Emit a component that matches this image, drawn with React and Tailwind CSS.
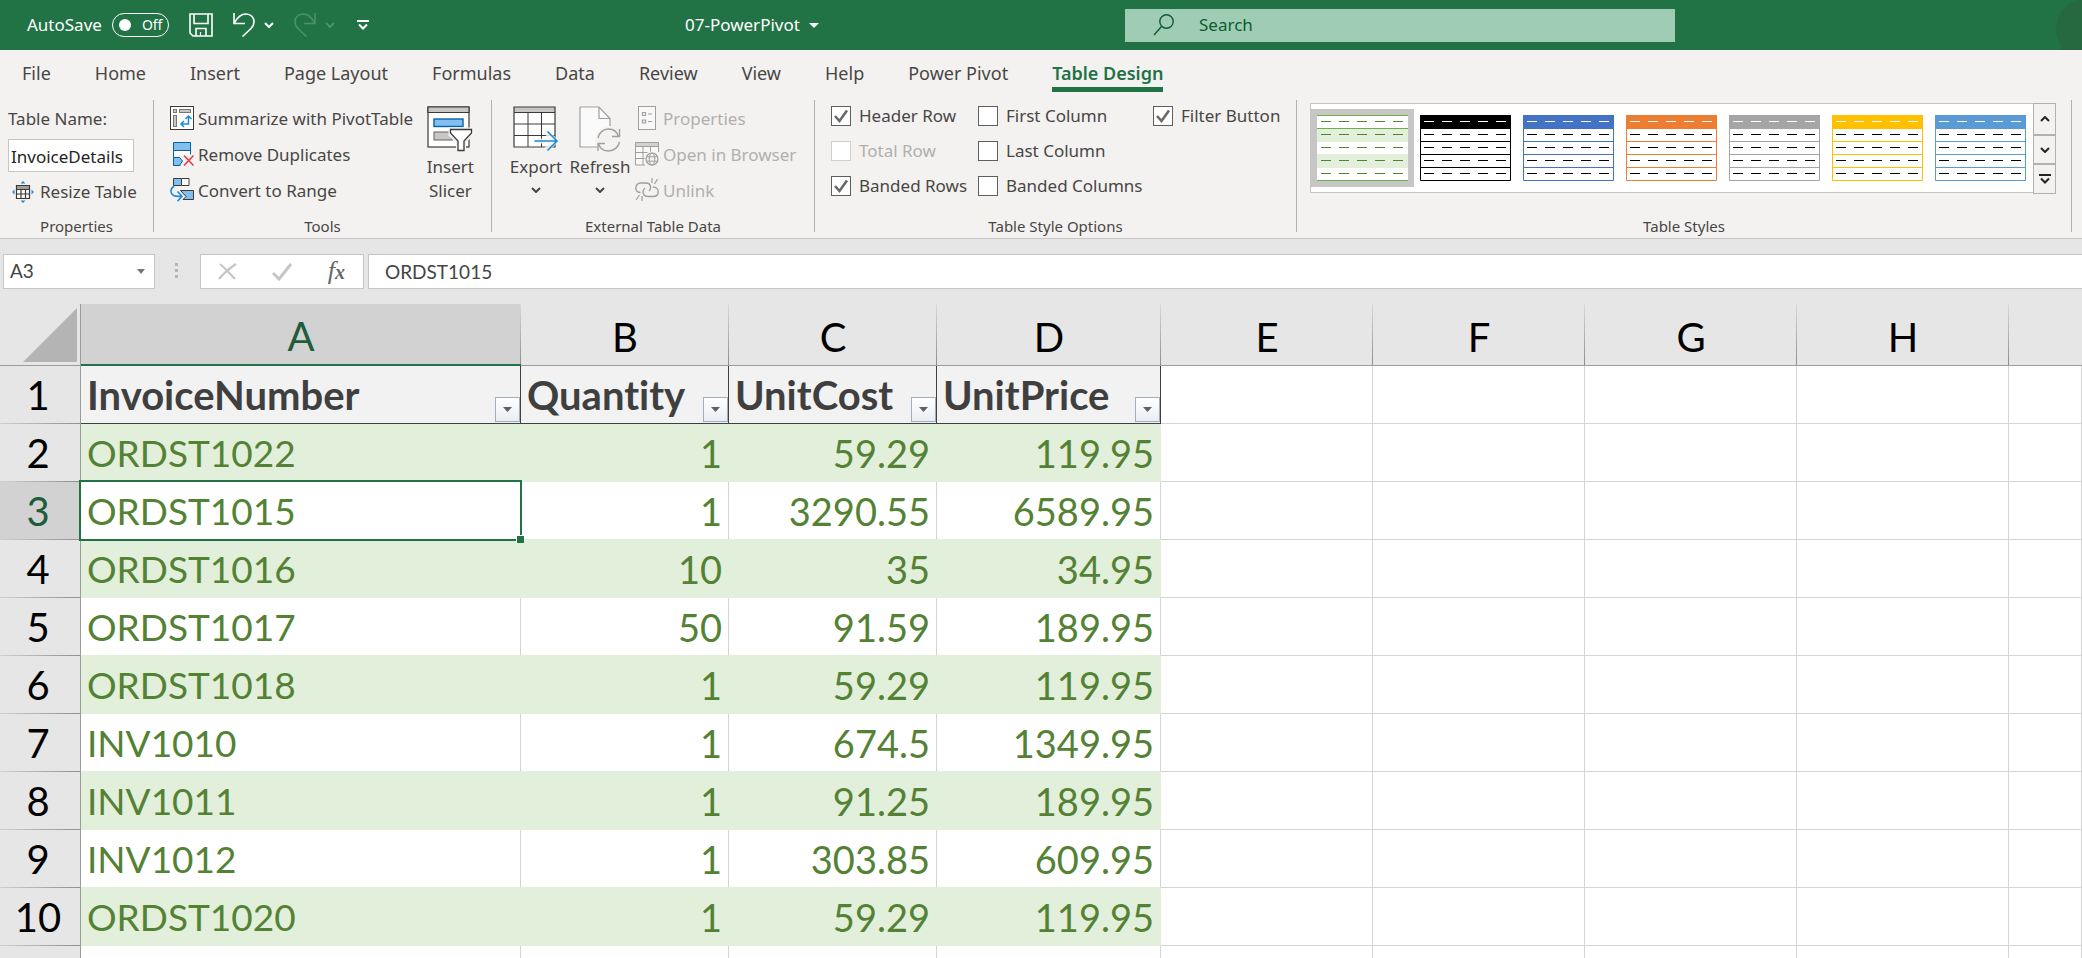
import React from "react";

const UI = "font-['Noto_Sans','Open_Sans',sans-serif]";

/* ---------- icons ---------- */
const Svg = ({ w, h, children, className = "" }) => (
  <svg width={w} height={h} viewBox={`0 0 ${w} ${h}`} fill="none" aria-hidden="true" className={`shrink-0 ${className}`}>
    {children}
  </svg>
);

const Chevron = ({ className = "" }) => (
  <Svg w={10} h={6} className={className}>
    <path d="M1 1l4 4 4-4" stroke="currentColor" strokeWidth="2" />
  </Svg>
);

const SaveIcon = () => (
  <Svg w={24} h={24}>
    <path d="M1 1h22v22H4l-3-3z" stroke="#fff" strokeWidth="1.6" />
    <path d="M5 1v9.5h14V1M7 23v-7.5h10V23" stroke="#fff" strokeWidth="1.6" />
    <path d="M11.5 19v4" stroke="#fff" strokeWidth="1.2" />
  </Svg>
);

const UndoIcon = ({ flip }) => (
  <Svg w={22} h={24} className={flip ? "-scale-x-100" : ""}>
    <path d="M1 0v10.5h11M1.5 10C4 5 8 1 13 1c5 0 8 3.500 8 8 0 3-1 4.500-3 6.500L9.500 23.500" stroke="currentColor" strokeWidth="1.6" />
  </Svg>
);

const SearchIcon = () => (
  <Svg w={22} h={22}>
    <circle cx="13.500" cy="7.500" r="6.700" stroke="#0e5c2f" strokeWidth="1.4" />
    <path d="M8.500 12.500L1 21" stroke="#0e5c2f" strokeWidth="1.4" />
  </Svg>
);

const ResizeIcon = () => (
  <Svg w={22} h={22}>
    <rect x="4.500" y="4.500" width="13" height="13" fill="#fff" />
    <path d="M5 6.500h12.500" stroke="#a19f9d" strokeWidth="3" />
    <path d="M4.500 4.500h13v13h-13zM4.500 8.500h13M4.500 13h13M9 8.500v9M13.500 8.500v9" stroke="#3b3a39" strokeWidth="1.200" />
    <path d="M8.500 2.500L11 0l2.500 2.500zM8.500 19.500L11 22l2.500-2.500zM2.500 8.500L0 11l2.500 2.500zM19.500 8.500L22 11l-2.500 2.500z" fill="#1e8bd6" />
  </Svg>
);

const PivotIcon = () => (
  <Svg w={24} h={24}>
    <rect x="0.500" y="0.500" width="23" height="23" fill="#fff" stroke="#3b3a39" />
    <rect x="3.500" y="3.500" width="3" height="3" fill="#c8c6c4" stroke="#797775" />
    <rect x="9.500" y="3.500" width="11" height="3" fill="#c8c6c4" stroke="#797775" />
    <rect x="3.500" y="9.500" width="3" height="11" fill="#c8c6c4" stroke="#797775" />
    <path d="M18.500 10v8H11M15.500 13l3-3 3 3M14 15l-3 3 3 3" stroke="#1e8bd6" strokeWidth="1.5" />
  </Svg>
);

const RemoveDupIcon = () => (
  <Svg w={24} h={24}>
    <path d="M3.500 0.500h17v8h-17z" fill="#83beec" stroke="#0063b1" />
    <path d="M4 9h16v5H4z" fill="#fff" />
    <path d="M3.500 8.500v15h7M20.500 8.500v4" stroke="#0063b1" />
    <path d="M3.500 15.500h6l3 3.500-3 4.500h-6z" fill="#83beec" stroke="#0063b1" />
    <path d="M14 13.500l9.500 10M23.500 13.500L14 23.500" stroke="#e8383d" strokeWidth="1.5" />
  </Svg>
);

const ConvertIcon = () => (
  <Svg w={24} h={24}>
    <path d="M3.500 0.500h8v7h-8z" fill="#83beec" stroke="#3b3a39" />
    <path d="M11.500 0.500h7.500v7h-7.500z" fill="#fff" stroke="#3b3a39" />
    <path d="M10.500 12.500h13v9H13l3-3z" fill="#83beec" stroke="#3b3a39" />
    <path d="M4 8C0.500 10.500-0.500 15 3.500 17.500c2 1 5 1 8 .8M7.500 13.500l4.500 4.700-4.500 5" stroke="#1e8bd6" strokeWidth="1.6" />
  </Svg>
);

const SlicerIcon = () => (
  <Svg w={46} h={46}>
    <rect x="1" y="1" width="41" height="40" fill="#fff" stroke="#3b3a39" strokeWidth="1.2" />
    <path d="M1 1h41v5.500H1z" fill="#c8c6c4" stroke="#3b3a39" strokeWidth="1.2" />
    <rect x="7" y="13" width="29" height="7.500" fill="#83beec" stroke="#0063b1" strokeWidth="1.4" />
    <rect x="7" y="26" width="18" height="8" fill="#c8c6c4" stroke="#797775" strokeWidth="1.2" />
    <path d="M21.500 21.500h25v8l-7.500 7V47H29V36.500l-7.500-7z" fill="#f3f2f1" />
    <path d="M23.500 23.500h21V27l-7.500 8v9.500h-6V35l-7.500-8z" fill="#fff" stroke="#3b3a39" strokeWidth="1.3" />
  </Svg>
);

const ExportIcon = () => (
  <Svg w={46} h={46}>
    <rect x="1" y="1" width="41" height="40" fill="#fff" />
    <path d="M1 1h41v5.500H1z" fill="#c8c6c4" />
    <path d="M1 18h41M1 29.500h41M15 7v34M28.500 7v34" stroke="#3b3a39" />
    <path d="M1 1h41v40H1zM1 6.500h41" stroke="#3b3a39" strokeWidth="1.2" />
    <path d="M21 32.500h15l-5-5 4-4 11 11.500-11 11-4-4 5-4.500H21z" fill="#f3f2f1" opacity=".85" />
    <path d="M21.500 35h22M34.500 25.500l9.500 9.500-9.500 9.500" stroke="#1e8bd6" strokeWidth="1.6" />
  </Svg>
);

const RefreshIcon = () => (
  <Svg w={42} h={46}>
    <path d="M1 1h19l11 11.500V41H1z" fill="#fafafa" />
    <path d="M18 41H1V1h19l11 11.500V20M20 1v11.500h11" stroke="#a19f9d" strokeWidth="1.2" />
    <circle cx="29.500" cy="34" r="13" fill="#f3f2f1" />
    <path d="M19 32c1-5 5-9 10.500-9 5 0 8.500 3 10 7M40.500 36c-1 5-5.500 9-11 9-5 0-8.500-3-10-7M40.500 23v7.500H33M19 45v-7.500h7" stroke="#a19f9d" strokeWidth="1.4" />
  </Svg>
);

const PropertiesIcon = () => (
  <Svg w={24} h={24}>
    <rect x="3.500" y="0.500" width="17" height="23" fill="#f8f8f8" stroke="#a19f9d" />
    <path d="M7.500 6.500h3v3h-3zM7.500 14h3v3h-3zM13 8h4M13 15.500h4" stroke="#a19f9d" strokeWidth="1.2" />
  </Svg>
);

const BrowserIcon = () => (
  <Svg w={24} h={24}>
    <rect x="0.500" y="0.500" width="23" height="22.500" fill="#f8f8f8" />
    <path d="M0.500 0.500h23v4H.5z" fill="#d2d0ce" />
    <path d="M23.500 10V.5H.5V23H10M.5 4.500h23M.5 10.500h12M.5 16.500h10M8 4.500V23M15.500 4.500V10" stroke="#a19f9d" />
    <circle cx="17" cy="17" r="7.500" fill="#f3f2f1" />
    <circle cx="17" cy="17" r="6" stroke="#a19f9d" strokeWidth="1.2" />
    <ellipse cx="17" cy="17" rx="2.800" ry="6" stroke="#a19f9d" />
    <path d="M11.500 14.800h11M11.500 19.200h11" stroke="#a19f9d" />
  </Svg>
);

const UnlinkIcon = () => (
  <Svg w={24} h={24}>
    <path d="M5.500 14.500C2.500 14.500.8 12.500.8 10S2.700 5 5.500 5h5.300c3 0 4.800 2 4.800 4.500 0 1.500-.6 2.700-1.600 3.500M18 9c3 0 5.200 2 5.200 4.700 0 2.800-2 4.800-5.200 4.800h-5c-3 0-5-2-5-4.700 0-1.700.6-2.800 2-3.800" stroke="#a19f9d" strokeWidth="1.4" />
    <path d="M17 0v5M22.500 1L19.500 6M1 22l3.500-5M7 18v5" stroke="#a19f9d" strokeWidth="1.2" />
  </Svg>
);

/* ---------- title bar ---------- */
function TitleBar() {
  return (
    <header className="grid h-[50px] shrink-0 grid-cols-[minmax(0,1125fr)_minmax(0,550fr)_minmax(0,407fr)] items-center overflow-hidden bg-[#217346] text-white">
      <div className="flex items-center pl-[27px]">
        <button type="button" role="switch" aria-checked="false" className="flex items-center gap-[10px] text-[17px] leading-6">
          AutoSave
          <span className="flex h-6 w-[57px] items-center gap-[11px] rounded-full border border-white pl-[6px] text-sm">
            <span className="size-3 rounded-full bg-white" />
            Off
          </span>
        </button>
        <button type="button" aria-label="Save" className="ml-5"><SaveIcon /></button>
        <button type="button" aria-label="Undo" className="ml-5"><UndoIcon /></button>
        <button type="button" aria-label="Undo history" className="ml-[9px]"><Chevron /></button>
        <button type="button" aria-label="Redo" disabled className="ml-5 text-[#4c9269]"><UndoIcon flip /></button>
        <button type="button" aria-label="Redo history" disabled className="ml-[9px] text-[#4c9269]"><Chevron /></button>
        <button type="button" aria-label="Customize quick access toolbar" className="ml-[22px]">
          <Svg w={12} h={10}>
            <path d="M0 1h12M2 4.500l4 4 4-4" stroke="#fff" strokeWidth="2" />
          </Svg>
        </button>
        <button type="button" className="mr-auto ml-auto flex items-center gap-[9px] pl-[10px] text-[17px] leading-6">
          07-PowerPivot
          <Svg w={10} h={5}><path d="M0 0h10L5 5z" fill="#fff" /></Svg>
        </button>
      </div>
      <label className="flex h-[33px] items-center gap-6 bg-[#9fcdb3] pl-7">
        <SearchIcon />
        <input
          type="search"
          aria-label="Search"
          placeholder="Search"
          className="min-w-0 flex-1 bg-transparent text-[17px] leading-6 text-[#0e5c2f] outline-none placeholder:text-[#0e5c2f]"
        />
      </label>
      <div className="flex justify-end">
        <Svg w={80} h={50}>
          <circle cx="84" cy="29" r="30" fill="#26683f" />
          <path d="M56 50l6-6 18-4v10z" fill="#26683f" />
        </Svg>
      </div>
    </header>
  );
}

const TABS = ["File", "Home", "Insert", "Page Layout", "Formulas", "Data", "Review", "View", "Help", "Power Pivot", "Table Design"];

function Tabs() {
  return (
    <nav className="flex h-[50px] shrink-0 items-start gap-11 pt-[9px] pl-[22px] text-lg leading-7 text-[#484644]">
      {TABS.map((t) => (
        <button
          key={t}
          type="button"
          className={
            t === "Table Design"
              ? "border-b-[5px] border-[#217346] font-semibold whitespace-nowrap text-[#217346]"
              : "whitespace-nowrap"
          }
        >
          {t}
        </button>
      ))}
    </nav>
  );
}

/* ---------- ribbon ---------- */
function Group({ label, className, children }) {
  return (
    <section aria-label={label} className={`flex h-[132px] flex-col border-r border-[#b3b0ad] ${className}`}>
      <div className="flex flex-1">{children}</div>
      <div className="h-4 text-center text-[15px] leading-[20px]">{label}</div>
    </section>
  );
}

const SmallButton = ({ icon, disabled, children }) => (
  <button type="button" disabled={disabled} className={`flex h-9 items-center gap-1 whitespace-nowrap ${disabled ? "text-[#b1afad]" : ""}`}>
    {icon}
    <span className="pt-[2px]">{children}</span>
  </button>
);

function Check({ label, checked, disabled }) {
  return (
    <label className={`flex h-[35px] items-start gap-2 pt-[6px] leading-5 whitespace-nowrap ${disabled ? "text-[#b1afad]" : ""}`}>
      <span className="grid">
        <input
          type="checkbox"
          defaultChecked={checked}
          disabled={disabled}
          className="peer col-start-1 row-start-1 size-5 appearance-none border border-[#605e5c] bg-white disabled:border-[#d2d0ce]"
        />
        <svg viewBox="0 0 20 20" fill="none" aria-hidden="true" className="pointer-events-none invisible col-start-1 row-start-1 size-5 peer-checked:visible">
          <path d="M4 10l4.500 5L16 4.500" stroke="#6b6967" strokeWidth="2.600" />
        </svg>
      </span>
      {label}
    </label>
  );
}

const STYLES = [
  { name: "Light green", selected: true },
  { name: "Black", color: "#000000" },
  { name: "Blue", color: "#4472c4" },
  { name: "Orange", color: "#ed7d31" },
  { name: "Gray", color: "#a5a5a5" },
  { name: "Gold", color: "#ffc000" },
  { name: "Light blue", color: "#5b9bd5" },
];

function StyleThumb({ style }) {
  const rows = [0, 1, 2, 3, 4];
  const dash = (r) => (style.selected ? "#548235" : r === 0 ? "#fff" : "#000");
  return (
    <Svg w={91} h={66}>
      <rect width="91" height="66" fill="#fff" />
      {style.selected ? (
        <>
          <path d="M0 14h91v13H0zM0 39h91v14H0z" fill="#e2efda" />
          <path d="M0 .5h91M0 13.500h91M0 65.500h91" stroke="#70ad47" />
        </>
      ) : (
        <>
          <path d="M0 0h91v14H0z" fill={style.color} />
          <path d="M.5.5h90v65H.5zM0 26.500h91M0 39.500h91M0 52.500h91" stroke={style.color} />
        </>
      )}
      {rows.map((r) => (
        <path key={r} d={`M4 ${r * 13 + 6.5}h84`} stroke={dash(r)} strokeDasharray="10 8" />
      ))}
    </Svg>
  );
}

function Ribbon() {
  return (
    <div className="flex h-[139px] shrink-0 items-start border-b border-[#c8c6c4] text-[17px] leading-6 text-[#484644]">
      <Group label="Properties" className="w-[154px]">
        <div className="flex flex-col items-start pt-[7px] pl-2">
          <label htmlFor="table-name" className="h-8">Table Name:</label>
          <input
            id="table-name"
            defaultValue="InvoiceDetails"
            className="h-[33px] w-[126px] border border-[#c8c6c4] bg-white pt-[2px] pl-[2px] text-[17px] text-[#252423] outline-none"
          />
          <button type="button" className="flex h-9 items-center gap-[6px] pt-[3px] pl-1 whitespace-nowrap">
            <ResizeIcon />
            Resize Table
          </button>
        </div>
      </Group>

      <Group label="Tools" className="w-[338px]">
        <div className="flex w-full justify-between pr-[17px] pl-4">
          <div className="flex flex-col items-start">
            <SmallButton icon={<PivotIcon />}>Summarize with PivotTable</SmallButton>
            <SmallButton icon={<RemoveDupIcon />}>Remove Duplicates</SmallButton>
            <SmallButton icon={<ConvertIcon />}>Convert to Range</SmallButton>
          </div>
          <button type="button" className="flex flex-col items-center pt-[6px]">
            <SlicerIcon />
            <span className="pt-[3px]">Insert</span>
            <span>Slicer</span>
          </button>
        </div>
      </Group>

      <Group label="External Table Data" className="w-[323px]">
        <div className="flex items-start pl-4">
          <button type="button" className="flex w-[56px] flex-col items-center pt-[6px]">
            <ExportIcon />
            <span className="pt-[3px]">Export</span>
            <Chevron className="mt-2" />
          </button>
          <button type="button" className="ml-[6px] flex w-[60px] flex-col items-center pt-[6px]">
            <RefreshIcon />
            <span className="pt-[3px]">Refresh</span>
            <Chevron className="mt-2" />
          </button>
          <div className="ml-[5px] flex flex-col items-start">
            <SmallButton disabled icon={<PropertiesIcon />}>Properties</SmallButton>
            <SmallButton disabled icon={<BrowserIcon />}>Open in Browser</SmallButton>
            <SmallButton disabled icon={<UnlinkIcon />}>Unlink</SmallButton>
          </div>
        </div>
      </Group>

      <Group label="Table Style Options" className="w-[482px]">
        <div className="grid auto-rows-[35px] grid-cols-[147px_175px_auto] content-start pl-4">
          <Check label="Header Row" checked />
          <Check label="First Column" />
          <Check label="Filter Button" checked />
          <Check label="Total Row" disabled />
          <Check label="Last Column" />
          <span />
          <Check label="Banded Rows" checked />
          <Check label="Banded Columns" />
        </div>
      </Group>

      <Group label="Table Styles" className="mr-[10px] min-w-0 flex-1">
        <div className="flex w-full items-start pt-[3px] pr-[15px] pl-[13px]">
          <div className="flex h-[90px] min-w-0 flex-1 items-center overflow-hidden border-y border-l border-[#c8c6c4] bg-white">
            {STYLES.map((s) => (
              <button
                key={s.name}
                type="button"
                aria-label={s.name}
                aria-pressed={!!s.selected}
                className={`flex h-[78px] w-[103px] shrink-0 items-center justify-center ${s.selected ? "bg-[#c6c6c6]" : ""}`}
              >
                <StyleThumb style={s} />
              </button>
            ))}
          </div>
          <div className="flex w-[23px] shrink-0 flex-col text-[#252423]">
            <button type="button" aria-label="Previous styles" className="flex h-8 items-center justify-center border border-[#b3b0ad]">
              <Chevron className="rotate-180" />
            </button>
            <button type="button" aria-label="Next styles" className="flex h-[29px] items-center justify-center border border-[#b3b0ad]">
              <Chevron />
            </button>
            <button type="button" aria-label="More styles" className="flex h-[30px] items-center justify-center border border-[#b3b0ad]">
              <Svg w={12} h={10}>
                <path d="M0 1h12M2 4.500l4 4 4-4" stroke="currentColor" strokeWidth="2" />
              </Svg>
            </button>
          </div>
        </div>
      </Group>
    </div>
  );
}

/* ---------- formula bar ---------- */
function FormulaBar() {
  return (
    <div className="flex h-[65px] shrink-0 items-start pt-[15px] pl-[3px] font-[Lato,sans-serif] text-[19px] text-[#444444]">
      <div className="flex h-[35px] w-[152px] items-center border border-[#c6c6c6] bg-white pr-[9px] pl-[6px]">
        <input aria-label="Name box" defaultValue="A3" className="min-w-0 flex-1 bg-transparent outline-none" />
        <Svg w={8} h={5}><path d="M0 0h8L4 5z" fill="#777" /></Svg>
      </div>
      <Svg w={45} h={35}>
        <path d="M20 9h3v3h-3zM20 15h3v3h-3zM20 21h3v3h-3z" fill="#b5b5b5" />
      </Svg>
      <div className="flex h-[35px] w-[164px] items-center justify-between border border-[#c6c6c6] bg-white pr-[18px] pl-[17px]">
        <button type="button" aria-label="Cancel">
          <Svg w={19} h={17}><path d="M2 1c5 4 10 10 15 15M18 1C12 5 6 10 1 16" stroke="#c6c6c6" strokeWidth="2.200" /></Svg>
        </button>
        <button type="button" aria-label="Enter">
          <Svg w={20} h={18}><path d="M1 10l6 6L19 1" stroke="#c6c6c6" strokeWidth="3" /></Svg>
        </button>
        <button type="button" aria-label="Insert function" className="font-['Liberation_Serif',serif] text-[26px] leading-6 text-[#666666] italic">
          f<span className="text-xl font-bold">x</span>
        </button>
      </div>
      <input
        aria-label="Formula bar"
        defaultValue="ORDST1015"
        className="ml-1 h-[35px] min-w-0 flex-1 border-y border-l border-[#c6c6c6] bg-white pl-4 outline-none"
      />
    </div>
  );
}

/* ---------- sheet ---------- */
const COLS = ["A", "B", "C", "D", "E", "F", "G", "H", ""];
const HEAD = ["InvoiceNumber", "Quantity", "UnitCost", "UnitPrice"];
const DATA = [
  ["ORDST1022", "1", "59.29", "119.95"],
  ["ORDST1015", "1", "3290.55", "6589.95"],
  ["ORDST1016", "10", "35", "34.95"],
  ["ORDST1017", "50", "91.59", "189.95"],
  ["ORDST1018", "1", "59.29", "119.95"],
  ["INV1010", "1", "674.5", "1349.95"],
  ["INV1011", "1", "91.25", "189.95"],
  ["INV1012", "1", "303.85", "609.95"],
  ["ORDST1020", "1", "59.29", "119.95"],
];
const EMPTY = ["E", "F", "G", "H", "I"];

function RowHead({ n, active }) {
  return (
    <th
      scope="row"
      className={`h-[58px] border-r border-[#9b9b9b] bg-[linear-gradient(to_right,#d0d0d0,#8f8f8f)] bg-[length:100%_1px] bg-bottom bg-no-repeat p-0 pr-1 text-[40px] leading-[48px] font-normal ${
        active ? "bg-[#d2d2d2] text-[#1e5c3c]" : "bg-[#e6e6e6] text-black"
      }`}
    >
      {n}
    </th>
  );
}

const EmptyCells = () => EMPTY.map((c) => <td key={c} className="border-r border-b border-[#d4d4d4] bg-white p-0" />);

function Sheet() {
  return (
    <main className="min-h-0 flex-1 overflow-hidden bg-white font-[Lato,sans-serif]">
      <table className="w-full table-fixed border-separate border-spacing-0">
        <colgroup>
          <col className="w-[81px]" />
          <col className="w-[440px]" />
          <col className="w-[208px]" />
          <col className="w-[208px]" />
          <col className="w-[224px]" />
          <col className="w-[212px]" />
          <col className="w-[212px]" />
          <col className="w-[212px]" />
          <col className="w-[212px]" />
          <col />
        </colgroup>
        <thead>
          <tr>
            <td className="h-[62px] border-r border-b border-[#9b9b9b] bg-[#e6e6e6] p-0">
              <button type="button" aria-label="Select all" className="flex w-full justify-end pr-[3px]">
                <Svg w={54} h={54}><path d="M54 0v54H0z" fill="#b4b4b4" /></Svg>
              </button>
            </td>
            {COLS.map((c) => (
              <th
                key={c || "rest"}
                scope="col"
                className={`h-[62px] p-0 pt-1 text-[40px] leading-[48px] font-normal ${
                  c ? "bg-[linear-gradient(to_bottom,#d8d8d8,#8f8f8f)] bg-[length:1px_100%] bg-right bg-no-repeat" : ""
                } ${
                  c === "A"
                    ? "border-b-2 border-[#217346] bg-[#d2d2d2] text-[#1e5c3c]"
                    : "border-b border-[#9b9b9b] bg-[#e6e6e6] text-black"
                }`}
              >
                {c}
              </th>
            ))}
          </tr>
        </thead>
        <tbody>
          <tr>
            <RowHead n={1} />
            {HEAD.map((h) => (
              <td key={h} className="border-r border-b border-[#3f3f3f] bg-[#f2f2f2] p-0">
                <div className="flex h-[57px] items-center justify-between pl-[6px] text-[40px] leading-[48px] font-bold text-[#3f3f3f] [font-variant-ligatures:none]">
                  {h}
                  <button
                    type="button"
                    aria-label={`Filter ${h}`}
                    className="mb-px flex size-[25px] shrink-0 items-center justify-center self-end border border-[#a3aebb] bg-linear-to-b from-white to-[#e9edf4]"
                  >
                    <Svg w={9} h={5}><path d="M0 0h9L4.500 5z" fill="#5f5f5f" /></Svg>
                  </button>
                </div>
              </td>
            ))}
            <EmptyCells />
          </tr>
          {DATA.map((row, i) => {
            const band = i % 2 === 0;
            const active = i === 1;
            return (
              <tr key={i}>
                <RowHead n={i + 2} active={active} />
                {row.map((v, j) => (
                  <td
                    key={j}
                    className={`relative border-r border-b border-b-[#e2efda] p-0 leading-[48px] text-[#548235] ${
                      band ? "border-r-[#e2efda] bg-[#e2efda]" : "border-r-[#d4d4d4] bg-white"
                    } ${j === 0 ? "pl-[6px] text-left text-[37px]" : "pr-[6px] text-right text-[38px]"}`}
                  >
                    {v}
                    {active && j === 0 && (
                      <>
                        <span className="pointer-events-none absolute -inset-[2px] z-10 border-2 border-[#217346]" />
                        <span className="absolute -right-1 -bottom-1 z-20 size-[8px] border-t border-l border-white bg-[#217346]" />
                      </>
                    )}
                  </td>
                ))}
                <EmptyCells />
              </tr>
            );
          })}
          <tr>
            <RowHead />
            {HEAD.map((h) => (
              <td key={h} className="border-r border-b border-[#d4d4d4] p-0" />
            ))}
            <EmptyCells />
          </tr>
        </tbody>
      </table>
    </main>
  );
}

export default function App() {
  return (
    <div className={`flex h-screen flex-col overflow-hidden bg-[#e6e6e6] ${UI}`}>
      <TitleBar />
      <div className="bg-[#f3f2f1]">
        <Tabs />
        <Ribbon />
      </div>
      <FormulaBar />
      <Sheet />
    </div>
  );
}
